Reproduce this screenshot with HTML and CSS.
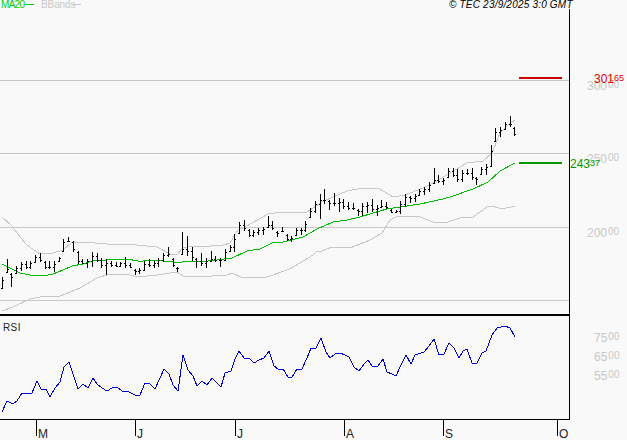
FILE: index.html
```html
<!DOCTYPE html>
<html lang="en">
<head>
<meta charset="utf-8">
<title>TEC chart</title>
<link rel="stylesheet" href="styles.css">
</head>
<body>
<svg class="chart" width="627" height="440" viewBox="0 0 627 440" xmlns="http://www.w3.org/2000/svg">
  <g class="grid">
    <path d="M0 80.5H569M0 153.5H569M0 227.5H569M0 300.5H569"/>
  </g>

  <polyline class="band" points="2,217 12,226 20,237 27,245 40,254 53,253 63,250 72,242 83,242 107,244 137,245 157,247 170,254 177,255 183,248 192,246 200,247 223,245 230,243 238,230 245,227 268,214 283,212 307,212 313,208 322,202 333,197 347,191 363,188 380,189 393,197 405,195 423,188 435,182 450,173 467,163 483,161 492,153 500,133 508,125 515,120"/>
  <polyline class="band" points="2,311 13,307 30,299 40,297 60,296 80,288 97,278 110,274 127,274 137,277 157,275 177,272 183,276 197,277 227,275 232,273 243,278 267,277 290,269 313,255 317,251 322,251 332,247 350,248 370,240 382,233 390,220 398,216 420,217 433,222 448,222 460,218 473,217 487,207 492,206 502,209 515,206"/>
  <polyline class="ma" points="2,264 10,268 20,273 30,275 43,276 53,274 63,270 72,266 83,264 95,260 107,260 127,259 138,261 143,261 153,260 173,262 182,262 193,261 200,262 217,260 232,258 247,251 260,249 272,243 283,242 303,237 317,229 333,222 347,220 360,217 373,213 387,209 400,207 420,204 443,199 453,196 473,189 488,182 500,171 515,163"/>

  <path id="bars" class="bars" d=""/>

  <path class="level-red" d="M519 77.5H562"/>
  <path class="level-green" d="M519 162.5H562"/>

  <polyline class="rsi" points="2,412 7,401 13,404 17,401 22,393 32,393 37,381 41,389 46,389 50,397 55,388 60,382 64,367 69,362 74,377 78,389 83,384 88,388 93,378 97,384 102,388 107,391 112,388 117,387 122,391 127,391 131,393 135,395 140,395 145,383 150,384 155,389 164,369 169,374 173,385 178,391 183,355 188,370 193,376 197,386 202,381 207,385 212,378 221,387 225,373 231,371 235,359 239,351 244,358 250,359 254,363 259,360 264,358 269,351 274,366 278,369 283,369 288,377 292,377 297,369 302,369 307,358 311,348 316,348 321,338 326,352 330,358 335,354 340,353 345,355 349,357 354,367 359,371 364,364 368,360 372,366 378,366 383,359 387,372 392,374 396,376 401,365 406,355 411,364 415,355 424,352 429,346 434,339 439,355 444,354 449,343 454,348 459,358 463,351 467,349 472,363 477,363 482,353 486,351 492,335 497,328 505,326 510,328 515,337"/>

  <g class="axis">
    <path class="axis-thin" d="M569.5 9V419M0 419.5H570M36.5 419V436M135.5 419V436M235.5 419V436M344.5 419V436M443.5 419V436M557.5 419V436"/>
    <path class="axis-thick" d="M0 315H570"/>
  </g>

  <text class="legend legend-ma" x="1" y="8">MA20</text>
  <path class="legend-line-ma" d="M25 4.5H34"/>
  <text class="legend legend-bb" x="41" y="8">BBands</text>
  <path class="legend-line-bb" d="M72 4.5H81"/>
  <text class="copyright" x="449" y="8">© TEC 23/9/2025 3:0 GMT</text>

  <text class="price" x="587" y="90">300<tspan class="minor" dx="1" dy="-2">00</tspan></text>
  <text class="price" x="587" y="163">250<tspan class="minor" dx="1" dy="-2">00</tspan></text>
  <text class="price" x="587" y="237">200<tspan class="minor" dx="1" dy="-2">00</tspan></text>
  <text class="price" x="594" y="342">75<tspan class="minor" dx="1" dy="-2">00</tspan></text>
  <text class="price" x="594" y="361">65<tspan class="minor" dx="1" dy="-2">00</tspan></text>
  <text class="price" x="594" y="380">55<tspan class="minor" dx="1" dy="-2">00</tspan></text>

  <text class="value value-red" x="594" y="83">301<tspan class="fraction" dx="-2.5" dy="-2">.65</tspan></text>
  <text class="value value-green" x="570" y="168">243<tspan class="fraction" dx="-2.5" dy="-2">.37</tspan></text>

  <text class="tag" x="3" y="331">RSI</text>
  <text class="month" x="38" y="438">M</text>
  <text class="month" x="137" y="438">J</text>
  <text class="month" x="237" y="438">J</text>
  <text class="month" x="346" y="438">A</text>
  <text class="month" x="445" y="438">S</text>
  <text class="month" x="559" y="438">O</text>
</svg>
<script src="chart.js"></script>
</body>
</html>
```

FILE: styles.css
```css
html, body {
  margin: 0;
  padding: 0;
  background: #f9f9f9;
}

.chart {
  display: block;
  font-family: "Liberation Sans", Arial, sans-serif;
}

.grid path { fill: none; stroke: #c8c8c8; stroke-width: 1; shape-rendering: crispEdges; }

.band, .ma, .rsi { fill: none; stroke-width: 1; shape-rendering: crispEdges; }
.band { stroke: #c8c8c8; }
.ma { stroke: #00bb00; }
.rsi { stroke: #0000cc; }

.bars { fill: none; stroke: #000; stroke-width: 1; shape-rendering: crispEdges; }

.level-red { fill: none; stroke: #cc0000; stroke-width: 2; shape-rendering: crispEdges; }
.level-green { fill: none; stroke: #009900; stroke-width: 2; shape-rendering: crispEdges; }

.axis-thin { fill: none; stroke: #000; stroke-width: 1; shape-rendering: crispEdges; }
.axis-thick { fill: none; stroke: #000; stroke-width: 2; shape-rendering: crispEdges; }

.legend { font-size: 10px; }
.legend-ma { fill: #00cc00; letter-spacing: -0.7px; }
.legend-bb { fill: #c8c8c8; letter-spacing: -0.1px; }
.legend-line-ma { fill: none; stroke: #00cc00; stroke-width: 1; shape-rendering: crispEdges; }
.legend-line-bb { fill: none; stroke: #c8c8c8; stroke-width: 1; shape-rendering: crispEdges; }

.copyright { font-size: 10px; font-style: italic; fill: #000; letter-spacing: 0.2px; }

.price { font-size: 12px; fill: #c8c8c8; }
.value { font-size: 12px; }
.value-red { fill: #dd0000; }
.value-green { fill: #009900; }
.minor { font-size: 10px; }
.fraction { font-size: 9px; }

.tag { font-size: 10px; fill: #222; letter-spacing: 0.4px; }
.month { font-size: 12px; fill: #222; }
```

FILE: chart.js
```js
// High / low pixel rows for each daily bar, oldest first.
var bars = [
  [277,288],[259,273],[273,287],[266,274],[262,271],[261,269],[261,269],[255,263],[253,262],[261,269],
  [261,269],[261,272],[257,262],[239,252],[237,242],[241,252],[251,264],[259,264],[259,268],[252,267],
  [253,262],[258,268],[259,275],[261,267],[262,267],[262,267],[257,268],[263,268],[269,275],[268,274],
  [261,271],[259,267],[261,268],[258,267],[253,262],[247,257],[258,267],[267,272],[232,255],[236,256],
  [247,261],[258,268],[253,266],[258,268],[251,262],[256,262],[258,267],[249,261],[245,252],[234,252],
  [222,234],[220,231],[229,237],[230,237],[228,235],[227,235],[216,228],[221,230],[231,237],[227,232],
  [234,241],[236,242],[228,236],[228,235],[221,232],[208,218],[201,213],[194,219],[189,204],[200,210],
  [193,206],[198,212],[199,209],[202,210],[203,210],[209,216],[203,216],[202,213],[199,212],[205,216],
  [200,208],[202,209],[209,213],[210,213],[201,214],[194,207],[196,203],[194,202],[189,196],[187,195],
  [182,192],[168,184],[175,183],[178,185],[168,178],[168,177],[169,182],[170,182],[169,175],[168,180],
  [177,185],[167,175],[164,175],[145,167],[128,142],[127,137],[122,130],[116,127],[127,136]
];

var d = "";
var prevClose = null;
bars.forEach(function (bar, i) {
  var x = Math.floor(2.3 + 4.745 * i) + 0.5;
  var hi = bar[0], lo = bar[1];
  var next = bars[i + 1] || bar;
  var rising = (next[0] + next[1]) < (hi + lo);
  var close = rising ? hi + Math.round((lo - hi) * 0.25) : lo - Math.round((lo - hi) * 0.25);
  var open = prevClose === null ? lo : Math.min(lo - 1, Math.max(hi + 1, prevClose));
  d += "M" + x + " " + hi + "V" + lo;
  d += "M" + (x - 1.5) + " " + (open + 0.5) + "H" + x;
  d += "M" + x + " " + (close + 0.5) + "H" + (x + 1.5);
  prevClose = close;
});
document.getElementById("bars").setAttribute("d", d);
```
